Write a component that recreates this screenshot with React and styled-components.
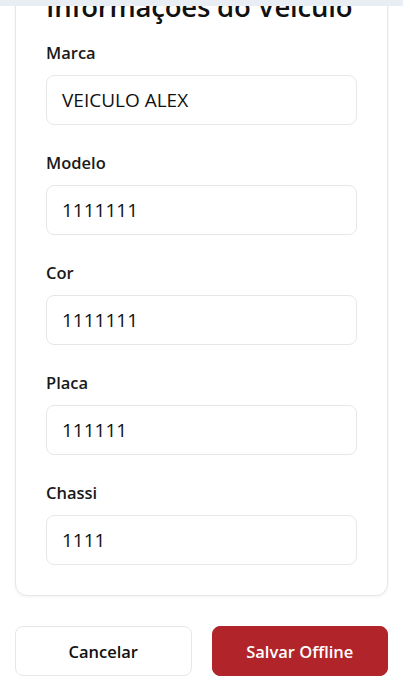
import React from "react";
import styled, { createGlobalStyle } from "styled-components";

const Global = createGlobalStyle`
  html, body { margin: 0; padding: 0; background: #ffffff; }
  body { font-family: "Open Sans", "Noto Sans", sans-serif; color: #111827; overflow: hidden; }
  * { box-sizing: border-box; }
`;

const TopBar = styled.div`
  position: fixed;
  top: 0;
  left: 0;
  right: 0;
  height: 6px;
  background: #e9edf4;
  z-index: 5;
`;

const Page = styled.div`
  margin-top: -12px;
  display: flex;
  flex-direction: column;
  gap: 30px;
  padding: 0 15px 20px;
`;

const Card = styled.section`
  border: 1px solid #e5e7eb;
  border-radius: 12px;
  padding: 0 30px 30px;
  background: #fff;
  box-shadow: 0 1px 3px rgba(0, 0, 0, 0.06);
  display: flex;
  flex-direction: column;
  gap: 25px;
`;

const Title = styled.h2`
  margin: 0 0 -10px;
  font-size: 27.5px;
  line-height: 36px;
  font-weight: 600;
  color: #111;
  letter-spacing: -0.2px;
  white-space: nowrap;
`;

const Field = styled.div`
  display: flex;
  flex-direction: column;
  gap: 10px;
`;

const Label = styled.label`
  font-size: 16.5px;
  line-height: 25px;
  font-weight: 600;
  color: #1a1a1a;
`;

const Input = styled.div`
  height: 50px;
  border: 1px solid #e5e7eb;
  border-radius: 8px;
  padding: 0 15px;
  display: flex;
  align-items: center;
  font-size: 19px;
  color: #111;
  background: #fff;
`;

const Actions = styled.div`
  display: flex;
  gap: 20px;
`;

const Button = styled.button`
  flex: 1;
  height: 50px;
  border-radius: 8px;
  font-family: inherit;
  font-size: 16.5px;
  font-weight: 600;
  cursor: pointer;
  border: 1px solid ${(p) => (p.$primary ? "#b0242a" : "#e5e7eb")};
  background: ${(p) => (p.$primary ? "#b0242a" : "#fff")};
  color: ${(p) => (p.$primary ? "#fff" : "#111")};
`;

const fields = [
  ["Marca", "VEICULO ALEX"],
  ["Modelo", "1111111"],
  ["Cor", "1111111"],
  ["Placa", "111111"],
  ["Chassi", "1111"],
];

export default function App() {
  return (
    <>
      <Global />
      <TopBar />
      <Page>
        <Card>
          <Title>Informações do Veículo</Title>
          {fields.map(([label, value]) => (
            <Field key={label}>
              <Label>{label}</Label>
              <Input>{value}</Input>
            </Field>
          ))}
        </Card>
        <Actions>
          <Button>Cancelar</Button>
          <Button $primary>Salvar Offline</Button>
        </Actions>
      </Page>
    </>
  );
}
